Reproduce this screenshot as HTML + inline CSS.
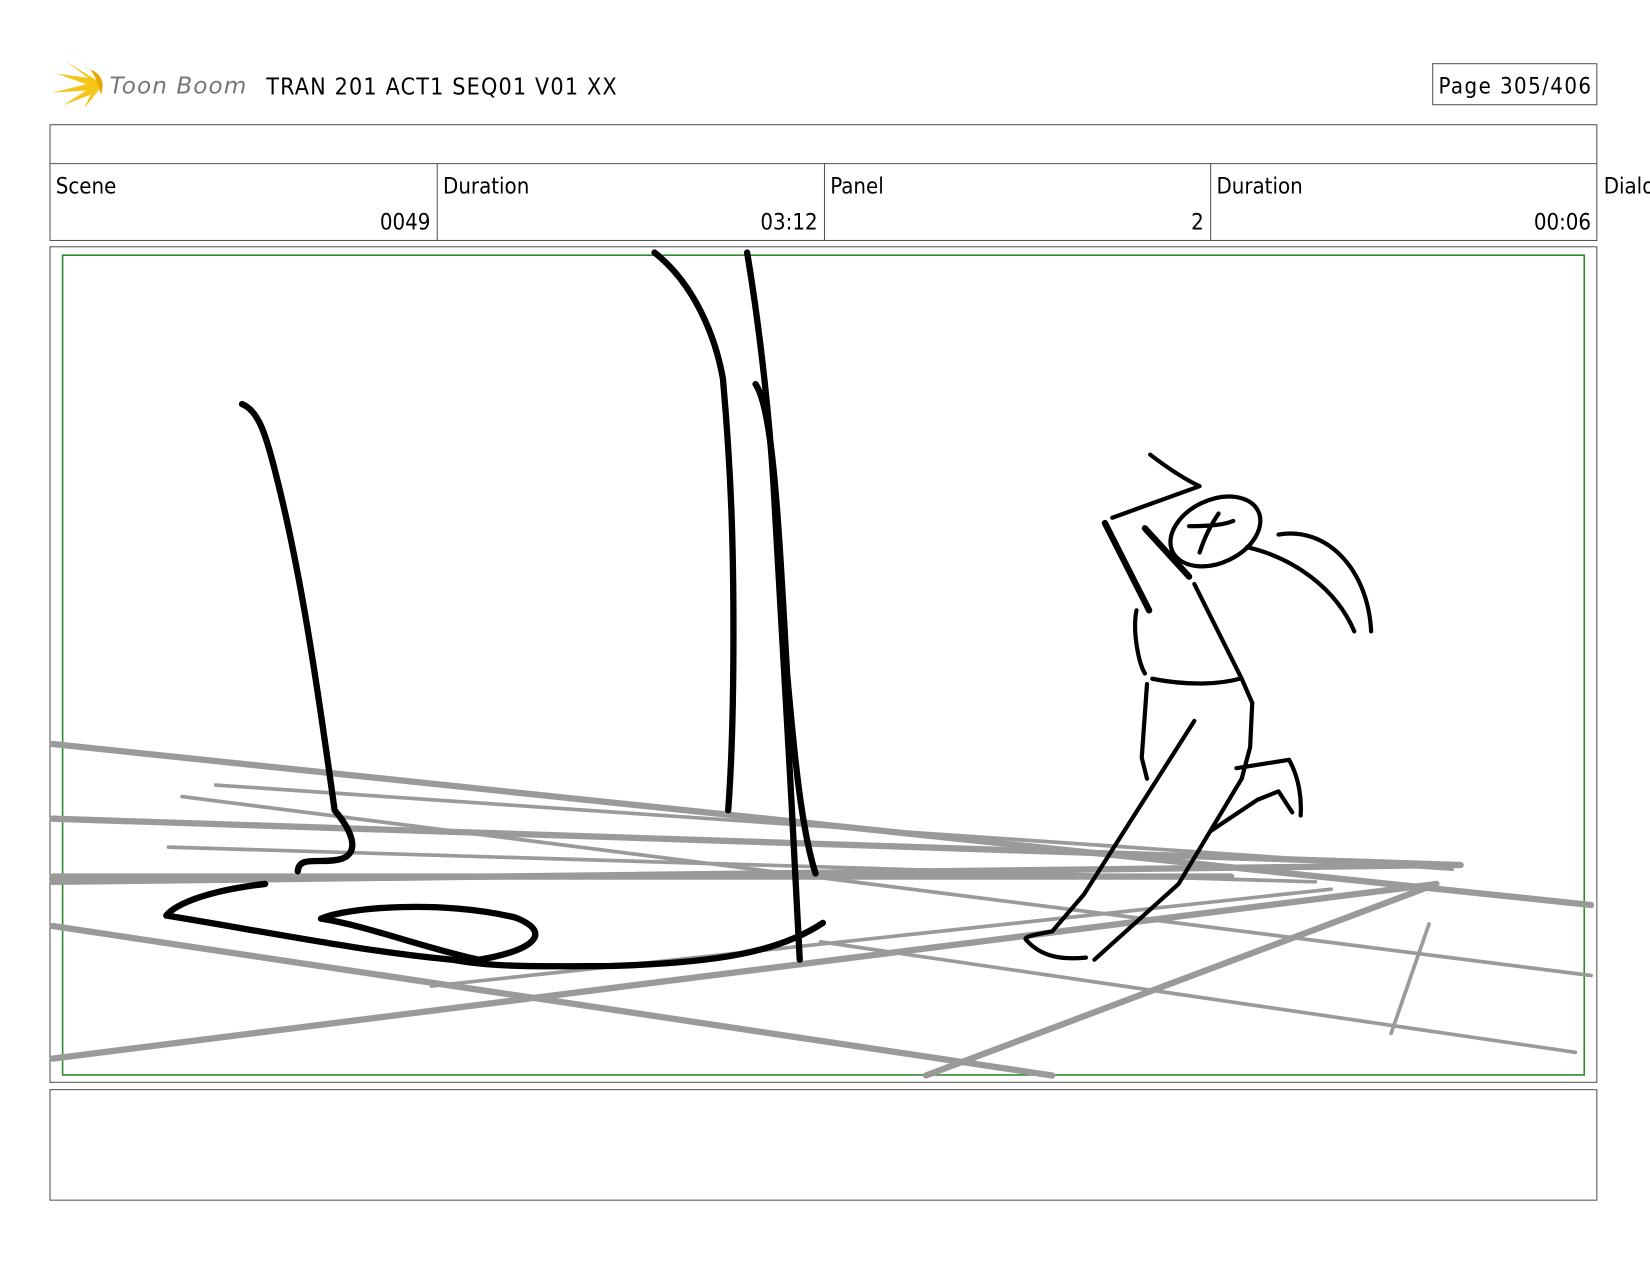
<!DOCTYPE html>
<html><head><meta charset="utf-8"><style>html,body{margin:0;padding:0;background:#fff;width:1650px;height:1275px;overflow:hidden}svg{display:block}</style></head><body>
<svg width="1650" height="1275" viewBox="0 0 1568 1211.6" xmlns="http://www.w3.org/2000/svg" font-family="'DejaVu Sans Condensed','DejaVu Sans','Liberation Sans',sans-serif">
<!-- logo -->
<g fill="#f5c518">
<path d="M98,80 L62,58 L84,74 L54,70 L82,80 L50,88 L82,86 L60,100 L86,90 L80,103 L92,88 Z"/>
<path d="M98,80 L76,56 L90,72 Z"/>
<path d="M86,66 C96,70 100,78 96,90 C94,84 92,74 86,66 Z" fill="#e8a800"/>
</g>
<text x="104" y="89" font-family="'DejaVu Sans','Liberation Sans',sans-serif" font-style="italic" font-size="22" fill="#777" textLength="130">Toon Boom</text>
<text x="253" y="90" font-size="22" fill="#000" textLength="333">TRAN 201 ACT1 SEQ01 V01 XX</text>
<rect x="1361.5" y="60.5" width="156" height="39" fill="none" stroke="#555" stroke-width="1"/>
<text x="1367" y="89" font-size="21" fill="#000" textLength="145">Page 305/406</text>
<!-- table -->
<g fill="none" stroke="#555" stroke-width="1">
<rect x="47.5" y="118.5" width="1470" height="110"/>
<line x1="47.5" y1="155.5" x2="1517.5" y2="155.5"/>
<line x1="415.5" y1="155.5" x2="415.5" y2="228.5"/>
<line x1="783.5" y1="155.5" x2="783.5" y2="228.5"/>
<line x1="1150.5" y1="155.5" x2="1150.5" y2="228.5"/>
<rect x="47.5" y="234.5" width="1470" height="794"/>
<rect x="47.5" y="1035.5" width="1470" height="105"/>
</g>
<g font-size="21" fill="#000">
<text x="53" y="184">Scene</text>
<text x="409" y="218" text-anchor="end">0049</text>
<text x="421" y="184">Duration</text>
<text x="777" y="218" text-anchor="end">03:12</text>
<text x="789" y="184">Panel</text>
<text x="1144" y="218" text-anchor="end">2</text>
<text x="1156" y="184">Duration</text>
<text x="1512" y="218" text-anchor="end">00:06</text>
<text x="1524" y="184">Dialo</text>
</g>
<rect x="59.5" y="242.5" width="1446" height="779" fill="none" stroke="#2a8a2a" stroke-width="1.5"/>
<!-- grey lines -->
<g stroke="#9a9a9a" stroke-width="6" stroke-linecap="round" fill="none">
<line x1="50" y1="707" x2="1512" y2="860"/>
<line x1="50" y1="778" x2="1388" y2="822"/>
<line x1="50" y1="838" x2="1388" y2="822"/>
<line x1="50" y1="833" x2="1170" y2="833"/>
<line x1="50" y1="880" x2="1000" y2="1022"/>
<line x1="50" y1="1006" x2="1365" y2="840"/>
<line x1="880" y1="1022" x2="1365" y2="840"/>
</g>
<g stroke="#9a9a9a" stroke-width="3.5" stroke-linecap="round" fill="none">
<line x1="205" y1="746" x2="1380" y2="826"/>
<line x1="173" y1="757" x2="1512" y2="927"/>
<line x1="160" y1="805" x2="1250" y2="838"/>
<line x1="780" y1="895" x2="1497" y2="1000"/>
<line x1="410" y1="937" x2="1265" y2="845"/>
<line x1="1322" y1="982" x2="1358" y2="878"/>
</g>
<!-- black strokes -->
<g stroke="#000" stroke-width="6" stroke-linecap="round" stroke-linejoin="round" fill="none">
<path d="M230,384 C245,390 252,410 262,450 C285,540 300,640 318,770 C335,790 342,810 325,816 C305,822 284,812 283,828"/>
<path d="M252,840 C200,846 168,858 158,870 C250,885 350,905 430,912 C470,920 530,918 580,918 C680,915 740,905 782,877"/>
<path d="M305,873 C330,862 420,855 490,872 C530,888 500,905 455,912 C400,900 350,880 305,873 Z"/>
<path d="M622,240 C660,270 680,320 687,360 C695,450 697,520 697,600 C697,680 695,730 692,770"/>
<path d="M710,240 C720,300 730,380 735,460 C745,620 752,760 760,912"/>
<path d="M718,365 C735,390 740,500 748,640 C755,720 762,790 775,830"/>
</g>
<!-- figure -->
<g stroke="#000" stroke-width="4" stroke-linecap="round" stroke-linejoin="round" fill="none">
<path d="M1093,432 C1110,445 1125,455 1140,462 L1057,492"/>
<path d="M1050,497 L1092,580" stroke-width="6"/>
<path d="M1088,502 L1130,548" stroke-width="6"/>
<ellipse cx="1155" cy="505" rx="45" ry="30" transform="rotate(-25 1155 505)"/>
<path d="M1130,500 C1140,500 1160,500 1172,495 M1140,525 C1145,510 1150,500 1158,488"/>
<path d="M1215,508 C1260,500 1300,540 1303,600"/>
<path d="M1185,520 C1230,530 1270,560 1287,600"/>
<path d="M1080,580 C1076,600 1082,630 1088,640"/>
<path d="M1135,555 L1180,645 L1190,668"/>
<path d="M1095,645 C1130,652 1160,650 1178,645"/>
<path d="M1090,650 L1085,720 L1090,740"/>
<path d="M1135,685 L1030,850 L1000,885 C985,888 972,890 975,893 C990,910 1010,912 1032,910"/>
<path d="M1190,668 L1188,710 L1180,740 L1120,840 L1040,912"/>
<path d="M1175,730 L1225,722 C1235,740 1237,760 1236,775"/>
<path d="M1150,790 L1195,760 L1215,752 L1228,772"/>
</g>
</svg>
</body></html>
